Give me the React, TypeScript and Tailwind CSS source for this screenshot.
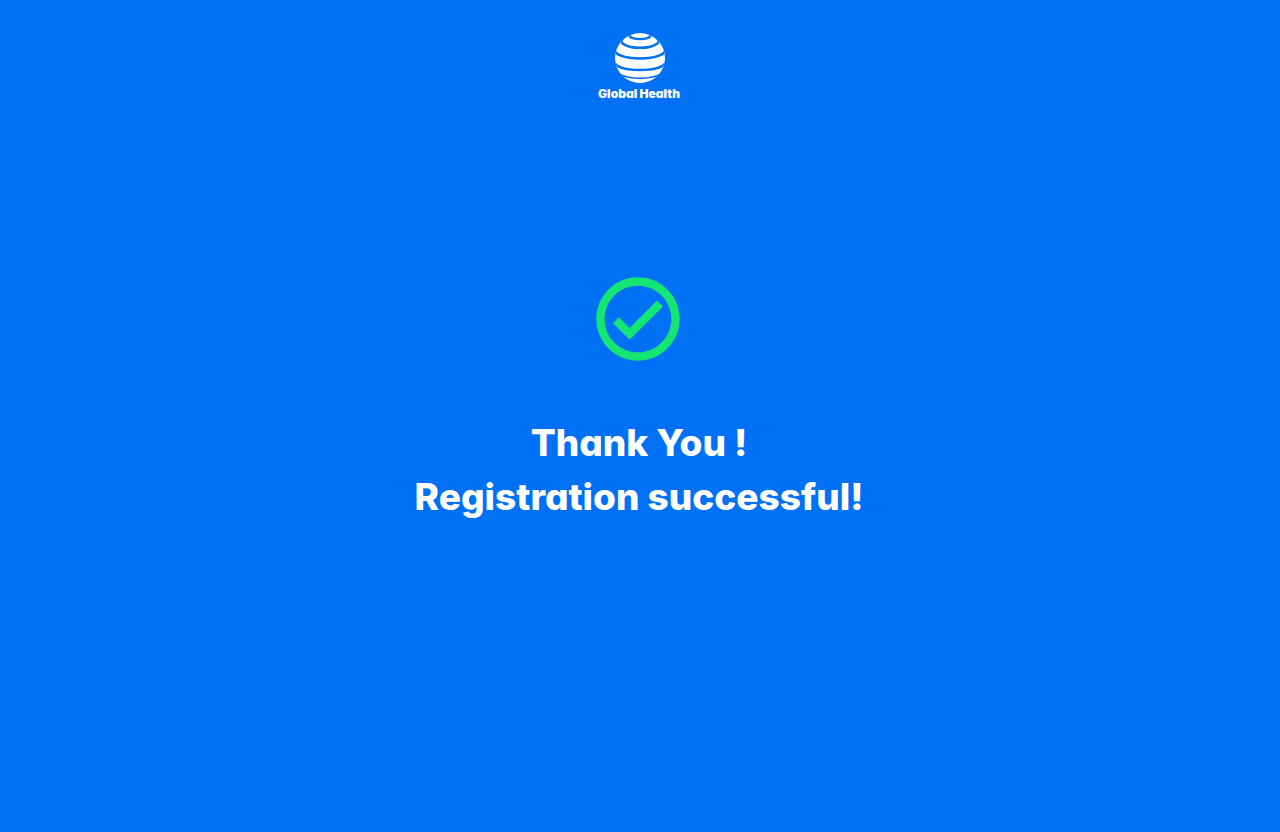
function GlobeLogo() {
  return (
    <svg viewBox="0 0 50 50" className="size-[50px]" aria-hidden="true">
      <defs>
        <clipPath id="globe">
          <circle cx="25" cy="25" r="25" />
        </clipPath>
      </defs>
      <g clipPath="url(#globe)">
        <rect width="50" height="50" fill="#fff" />
        <g fill="none" stroke="#0071f4">
          <ellipse cx="25" cy="2.5" rx="10.5" ry="3.6" strokeWidth="2.4" />
          <path d="M8 5C3 9 10 14.8 25 14.8S47 9 42 5" strokeWidth="2.5" />
          <path d="M-1 16C-1 21 9 25.5 25 25.5S51 21 51 16" strokeWidth="2.6" />
          <path d="M-1 29C1 34 11 37 25 37S49 34 51 29" strokeWidth="2.4" />
          <path d="M5 41.5C10 44 16 45.2 25 45.2S40 44 45 41.5" strokeWidth="1.6" />
        </g>
      </g>
    </svg>
  );
}

function SuccessIcon() {
  return (
    <svg viewBox="0 0 24 24" className="size-[100px] fill-[#14e573]" role="img" aria-label="Success">
      <path d="M16.59 7.58 10 14.17l-2.59-2.58L6 13l4 4 8-8zM12 2C6.48 2 2 6.48 2 12s4.48 10 10 10 10-4.48 10-10S17.52 2 12 2m0 18c-4.42 0-8-3.58-8-8s3.58-8 8-8 8 3.58 8 8-3.58 8-8 8" />
    </svg>
  );
}

export default function App() {
  return (
    <div className="flex min-h-screen flex-col items-center bg-[#0071f4] font-['Inter',sans-serif] text-white [font-feature-settings:'cv11']">
      <header className="flex flex-col items-center pt-[33px]">
        <GlobeLogo />
        <p className="mt-0.5 pr-0.5 text-[12px] leading-[18px] font-black">Global Health</p>
      </header>
      <main className="flex flex-col items-center pt-[166px] pr-1 text-center">
        <SuccessIcon />
        <h1 className="mt-[47px] pl-0.5 text-[37px] leading-[54px] font-extrabold">
          Thank You !<br />
          Registration successful!
        </h1>
      </main>
    </div>
  );
}
